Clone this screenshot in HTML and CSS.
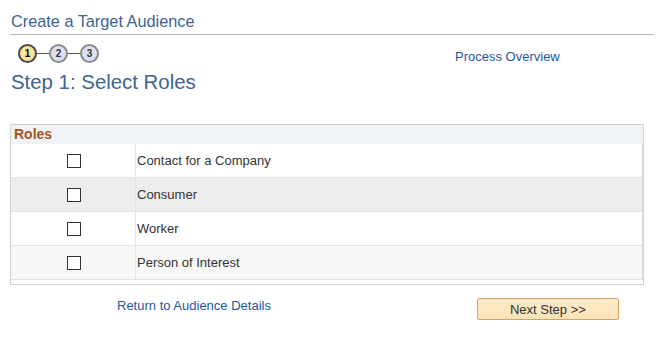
FILE: index.html
```html
<!DOCTYPE html>
<html>
<head>
<meta charset="utf-8">
<link rel="stylesheet" href="styles.css">
</head>
<body>
<div class="page">
  <h1 class="title">Create a Target Audience</h1>
  <div class="steprow">
    <div class="steps">
      <span class="dot cur">1</span><span class="link"></span><span class="dot">2</span><span class="link"></span><span class="dot">3</span>
    </div>
    <a class="overview" href="#">Process Overview</a>
  </div>
  <h2 class="step">Step 1: Select Roles</h2>
  <div class="grid">
    <div class="ghead">Roles</div>
    <div class="grow"><div class="cb"><span class="box"></span></div><div class="lbl">Contact for a Company</div></div>
    <div class="grow alt"><div class="cb"><span class="box"></span></div><div class="lbl">Consumer</div></div>
    <div class="grow"><div class="cb"><span class="box"></span></div><div class="lbl">Worker</div></div>
    <div class="grow alt2"><div class="cb"><span class="box"></span></div><div class="lbl">Person of Interest</div></div>
  </div>
  <div class="footer">
    <a class="back" href="#">Return to Audience Details</a>
    <button class="next">Next Step &gt;&gt;</button>
  </div>
</div>
</body>
</html>
```
FILE: styles.css
```css
* { box-sizing: border-box; }
body { margin: 0; background: #fff; font-family: "Liberation Sans", Arial, sans-serif; }
.page { padding: 11px 2px 0 10px; width: 656px; }
.title { margin: 0; font-size: 16.3px; font-weight: normal; color: #3d6390; line-height: 21px; padding: 0 0 2px 1px; border-bottom: 1px solid #b9b9b9; }
.steprow { display: flex; align-items: center; height: 26px; margin-top: 5px; }
.steps { display: flex; align-items: center; width: 445px; padding-left: 8px; }
.dot { width: 19px; height: 19px; border-radius: 50%; border: 2px solid #8a8a8a; background: #d9e1f2; color: #333; font-size: 10px; font-weight: bold; display: flex; align-items: center; justify-content: center; }
.dot.cur { background: #fde29a; border-color: #4a4a4a; color: #000; }
.link { width: 12px; height: 1px; background: #555; }
.overview { color: #1f57a0; font-size: 13px; text-decoration: none; margin-top: 7px; }
.step { margin: 4px 0 0 1px; font-size: 20.4px; font-weight: normal; color: #3d6390; line-height: 24px; }
.grid { margin-top: 30px; width: 634px; border: 1px solid #cfd2d4; padding-bottom: 4px; }
.ghead { background: #eff3f5; color: #a8521c; font-weight: bold; font-size: 14px; height: 19px; line-height: 19px; padding-left: 3px; }
.grow { display: flex; height: 34px; background: #fff; border-bottom: 1px solid #e3e3e3; border-right: 1px solid #dcdcdc; }
.grow.alt { background: #ededed; }
.grow.alt2 { background: #f7f7f7; }
.cb { width: 125px; border-right: 1px solid #e3e3e3; display: flex; align-items: center; justify-content: center; }
.box { width: 14px; height: 14px; border: 1px solid #333; background: #fff; margin-left: 1px; }
.lbl { padding-left: 1px; display: flex; align-items: center; font-size: 13px; color: #333; }
.footer { display: flex; align-items: center; margin-top: 13px; }
.back { margin-left: 107px; color: #1f57a0; font-size: 13px; text-decoration: none; margin-top: -7px; }
.next { margin-left: 206px; width: 142px; height: 22px; border: 1px solid #d2a26a; border-radius: 2px; background: linear-gradient(#fdebc9, #fbe3b6); color: #333; font-family: "Liberation Sans", Arial, sans-serif; font-size: 13px; padding: 0; }
```
